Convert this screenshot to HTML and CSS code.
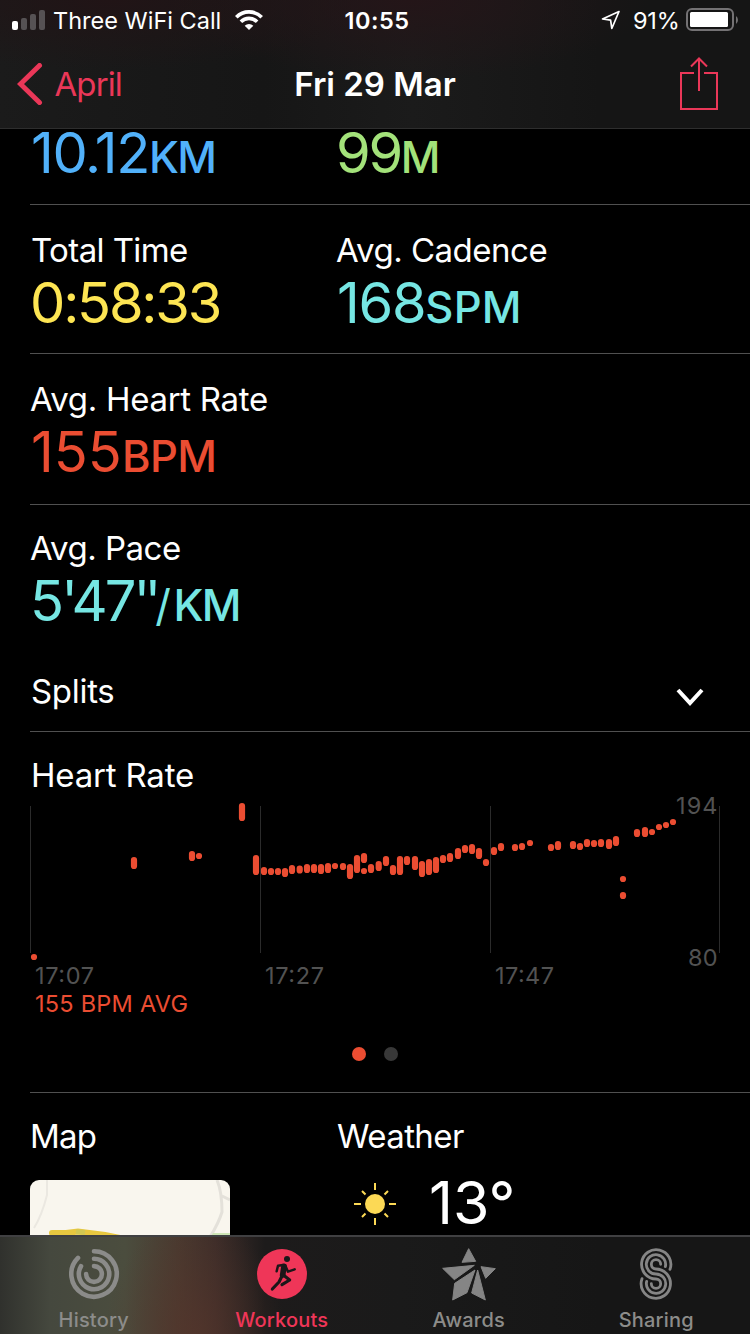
FILE: index.html
```html
<!DOCTYPE html>
<html lang="en">
<head>
<meta charset="utf-8">
<title>Fri 29 Mar</title>
<link rel="stylesheet" href="styles.css">
</head>
<body>
<div class="screen">
  <header class="header">
    <div class="status">
      <div class="status-left">
        <svg class="signal" width="34" height="20" viewBox="0 0 34 20">
          <rect x="0" y="11" width="6" height="9" rx="2" fill="#fff"/>
          <g fill="#565254"><rect x="9" y="8" width="6" height="12" rx="2"/><rect x="18" y="4" width="6" height="16" rx="2"/><rect x="27" y="0" width="6" height="20" rx="2"/></g>
        </svg>
        <span class="carrier">Three WiFi Call</span>
        <svg class="wifi" width="28" height="20" viewBox="0 0 28 20" fill="none" stroke="#fff" stroke-width="3.7">
          <path d="M1.3 7.2A18 18 0 0 1 26.7 7.2M5.9 11.7A11.5 11.5 0 0 1 22.1 11.7"/>
          <path d="M14 20L9.7 15.7A6.2 6.2 0 0 1 18.3 15.7Z" fill="#fff" stroke="none"/>
        </svg>
      </div>
      <span class="clock">10:55</span>
      <div class="status-right">
        <svg class="location" width="20" height="20" viewBox="0 0 20 20" fill="none" stroke="#fff" stroke-width="1.7" stroke-linejoin="round"><path d="M18 1.5L1.5 9L9.600 10.200L10.800 18.500Z"/></svg>
        <span class="percent">91%</span>
        <svg class="battery" width="54" height="24" viewBox="0 0 54 24">
          <rect x="1" y="1" width="46" height="21" rx="5" fill="none" stroke="#747274" stroke-width="2"/>
          <rect x="4" y="4" width="38" height="15" rx="1.5" fill="#fff"/>
          <path d="M50 8a5 5 0 0 1 0 8z" fill="#747274"/>
        </svg>
      </div>
    </div>
    <nav class="nav">
      <a class="back">
        <svg width="26" height="42" viewBox="0 0 26 42" fill="none" stroke="#ea3758" stroke-width="5" stroke-linecap="round" stroke-linejoin="miter"><path d="M22.5 2.5L3.5 21L22.5 39.5"/></svg>
        <span class="back-text">April</span>
      </a>
      <h1 class="title">Fri 29 Mar</h1>
      <svg class="share" width="38" height="54" viewBox="0 0 38 54" fill="none" stroke="#ea3758" stroke-width="2"><path d="M14 16H1V52H37V16H24M19 34V2M11 9.5L19 1.5L27 9.5"/></svg>
    </nav>
  </header>

  <main class="content">
    <section class="row row-first">
      <div class="metric"><div class="value blue"><span class="v-distance">10.12</span><span class="unit unit-tight">KM</span></div></div>
      <div class="metric"><div class="value green"><span class="v-climb">99</span><span class="unit">M</span></div></div>
    </section>
    <section class="row row-time">
      <div class="metric"><div class="label l-time">Total Time</div><div class="value yellow"><span class="v-time">0:58:33</span></div></div>
      <div class="metric"><div class="label l-avg">Avg. Cadence</div><div class="value cyan"><span class="v-cadence">168</span><span class="unit unit-wide">SPM</span></div></div>
    </section>
    <section class="row row-heart">
      <div class="metric"><div class="label l-avg l-rate">Avg. Heart Rate</div><div class="value red"><span class="v-rate">155</span><span class="unit">BPM</span></div></div>
    </section>
    <section class="row row-pace">
      <div class="metric"><div class="label l-avg">Avg. Pace</div><div class="value cyan"><span class="v-pace">5'47<span class="seconds">''</span></span><span class="unit unit-pace"><span class="slash">/</span>KM</span></div></div>
    </section>
    <section class="row row-splits">
      <div class="label l-splits">Splits</div>
      <svg class="chevron" width="28" height="19" viewBox="0 0 28 19" fill="none" stroke="#fff" stroke-width="4"><path d="M2 2L14 15L26 2"/></svg>
    </section>
    <section class="chart-section">
      <div class="label l-chart">Heart Rate</div>
      <svg class="chart" width="750" height="220" viewBox="0 797 750 220">
        <path class="grid" d="M30.5 806V953M260.5 806V953M490.5 806V953M719.5 806V953"/>
        <path class="beats" d="M34 957v.01M134 860v6M192 854v4M199 856v.01M242 806v12M256 858v14
          M264 870v2M271 871v1M278 871v1M285 871v3M292 868v3M299.700 868.500v2M307 867v3M314 867v3M321 867v4M328 866v4M335 866v.01M343 866v1M350 867v9M357 858v12M364 856v4M364 871v.01M371 867v3M378.700 864v4M386 859v4M393 868v4M400 859v13M407 859v3M415 859v8M422 864v10M429 862v10M436 860v10M443 858v2M450 856v3M458 851v5M465 848v2M472 847v4M479 851v5M486 862v1
          M494 850v2M501 846v2M515 847v1M522 846v1M530 843v.01M551 847v1M558 844v3M573 844v2M580 846v1M587 842v2M594 843v1M601 842v2M609 842v4M616 839v4M623 879v.01M623 895v1M637 832v2M645 830v4M652 832v.01M659 827v.01M666 825v.01M673 822v.01"/>
        <text class="axis" x="35" y="984" textLength="59">17:07</text>
        <text class="axis" x="265" y="984" textLength="59">17:27</text>
        <text class="axis" x="495" y="984" textLength="59">17:47</text>
        <text class="axis" x="676" y="814" textLength="41.500">194</text>
        <text class="axis" x="688" y="966" textLength="29.500">80</text>
        <text class="average" x="35" y="1012" textLength="153">155 BPM AVG</text>
      </svg>
      <div class="pager"><i class="dot dot-on"></i><i class="dot"></i></div>
    </section>
    <section class="footer-row">
      <div class="metric">
        <div class="label l-map">Map</div>
        <svg class="map" width="200" height="56" viewBox="0 0 200 56" fill="none">
          <rect width="200" height="60" fill="#f9f6ee"/>
          <path d="M17 0V15Q12 35 4 48" stroke="#ebe8e1" stroke-width="2"/>
          <path d="M187 0Q192 12 192 32Q188 45 178 60M192 16L200 20" stroke="#e4e1da" stroke-width="3"/>
          <path d="M183 53H200V60H178Z" fill="#cde5b5"/>
          <path d="M22 53L36 53L48 51.500L75 55L95 59" stroke="#e8c840" stroke-width="6" stroke-linecap="round"/>
          <path d="M46 51.800L55 52.500" stroke="#d3c852" stroke-width="5"/>
        </svg>
      </div>
      <div class="metric">
        <div class="label l-weather">Weather</div>
        <div class="weather">
          <svg class="sun" width="42" height="42" viewBox="-21 -21 42 42" stroke="#fcd955" stroke-width="2"><circle r="10" fill="#fcd955" stroke="none"/><path d="M0 -21V-14M0 21V14M-21 0H-14M21 0H14M-13 -13L-9.500 -9.500M13 13L9.500 9.500M-13 13L-9.500 9.500M13 -13L9.500 -9.500"/></svg>
          <span class="temp">13°</span>
        </div>
      </div>
    </section>
  </main>

  <nav class="tabs">
    <a class="tab">
      <svg width="54" height="54" viewBox="-27 -27 54 54" fill="none" stroke="#8b8b89" stroke-width="4.600" stroke-linecap="round"><path d="M0 -22.700A22.700 22.700 0 1 1 -16 -16.100M0 -15.200A15.200 15.200 0 1 1 -13 -7.800M0 -7.900A7.900 7.900 0 1 1 -7.900 0"/></svg>
      <span class="tab-text">History</span>
    </a>
    <a class="tab tab-on">
      <svg width="54" height="54" viewBox="0 0 162 162" fill="none" stroke="#1b1719" stroke-linecap="round" stroke-linejoin="round">
        <circle cx="81" cy="81" r="75" fill="#ef3658" stroke="none"/>
        <circle cx="96" cy="36" r="9" fill="#1b1719" stroke="none"/>
        <path d="M87 58L83 84" stroke-width="17"/>
        <path d="M84 54L69 56L65 73M91 56L99 74L119 67" stroke-width="7.500"/>
        <path d="M86 85L104 99L81 113M81 87L72 105L52 126" stroke-width="9.500"/>
      </svg>
      <span class="tab-text">Workouts</span>
    </a>
    <a class="tab">
      <svg width="54" height="54" viewBox="18 21 162 162" fill="#858585" stroke="#858585" stroke-width="3" stroke-linejoin="round"><path d="M98 26L119 64L78 67ZM20 85L115 76L55 119ZM117 90L93 158L50 180L56 130ZM125 90L148 180L107 159ZM135 80L178 86L149 115Z"/></svg>
      <span class="tab-text">Awards</span>
    </a>
    <a class="tab">
      <svg width="54" height="54" viewBox="-3 21 162 162" fill="none" stroke="#858585" stroke-width="8.500" stroke-linecap="round"><path d="M120 88A44 44 0 1 0 78 117A14 14 0 1 1 64 131M106 80A29 29 0 1 0 78 102A29 29 0 1 1 50 124M92 73A14 14 0 1 0 78 87A44 44 0 1 1 36 116"/></svg>
      <span class="tab-text">Sharing</span>
    </a>
  </nav>
</div>
</body>
</html>
```
FILE: styles.css
```css
* { box-sizing: border-box; }
body { margin: 0; background: #000; color: #fff; font-family: Inter, "Liberation Sans", sans-serif; }
svg { display: block; flex: none; }
.screen { width: 750px; height: 1334px; overflow: hidden; display: flex; flex-direction: column; background: #000; }

.header { height: 129px; flex: none; border-bottom: 1px solid #2e2e2e; background: radial-gradient(ellipse 240px 80px at 410px 0, #241518, rgba(36,21,24,0)), radial-gradient(ellipse 260px 70px at 110px 0, #211416, rgba(33,20,22,0)), linear-gradient(90deg, #1b1b1b, #161616 35%, #1b1b1b 55%, #151515 80%); }
.status { height: 40px; display: grid; grid-template-columns: 1fr auto 1fr; align-items: center; padding: 0 12px; font-size: 23.5px; line-height: 39px; }
.status-left { display: flex; align-items: center; }
.carrier { margin-left: 7px; width: 182px; white-space: nowrap; padding-top: 1px; }
.clock { font-weight: 600; letter-spacing: .5px; padding: 1px 0 0 4px; }
.status-right { display: flex; align-items: center; justify-content: flex-end; }
.percent { width: 47px; margin: 0 6px 0 12px; white-space: nowrap; letter-spacing: -.2px; padding-top: 1px; }
.battery { margin-right: -2px; }
.nav { height: 88px; display: grid; grid-template-columns: 1fr auto 1fr; align-items: center; padding: 0 32px 0 32px; }
.back { display: flex; align-items: center; gap: 11.5px; margin-left: -15px; color: #ea3758; font-size: 33px; letter-spacing: -.9px; }
.title { margin: 0; font-size: 33px; font-weight: 600; }
.share { justify-self: end; }

.content { flex: 1; min-height: 0; display: flex; flex-direction: column; }
.row { flex: none; margin-left: 30px; border-bottom: 1px solid #505050; display: grid; grid-template-columns: 306px 1fr; }
.row-first { height: 76px; padding-top: 2px; }
.row-time { height: 149px; padding-top: 25px; }
.row-heart { height: 151px; padding-top: 25px; }
.row-pace { height: 153px; padding-top: 23px; border: 0; }
.row-splits { height: 74px; padding-top: 13px; grid-template-columns: 1fr auto; }
.chevron { margin: 17px 46px 0 0; }

.label { font-size: 33px; line-height: 40px; white-space: nowrap; padding-left: 1px; letter-spacing: -.6px; }
.l-avg { padding-left: 0; letter-spacing: -.5px; }
.l-rate { letter-spacing: -.3px; }
.l-splits, .l-chart { letter-spacing: -.3px; }
.l-chart { padding-left: 31px; letter-spacing: -.2px; }
.l-map { padding-left: 0; letter-spacing: -.8px; }

.value { font-size: 56px; line-height: 44px; margin-top: 11px; white-space: nowrap; }
.row-first .value { margin-top: 0; }
.v-distance { margin-left: 1px; letter-spacing: -1.4px; }
.v-climb { margin-left: 0; letter-spacing: -2.3px; }
.v-time { letter-spacing: -2.2px; }
.v-cadence { margin-left: 1px; letter-spacing: -1.3px; }
.v-rate { margin-left: 1px; }
.v-pace { margin-left: 0; letter-spacing: -2.9px; }
.seconds { letter-spacing: -6px; }
.unit { font-size: 43.5px; line-height: 0; font-weight: 500; letter-spacing: -.5px; }
.unit-tight { letter-spacing: -1.5px; }
.unit-wide { letter-spacing: .3px; }
.unit-pace { letter-spacing: -1.5px; }
.slash { font-weight: 400; letter-spacing: 2.5px; }
.blue { color: #51b1fa; }
.green { color: #a3e27a; }
.yellow { color: #fde553; }
.cyan { color: #76e6e3; }
.red { color: #eb4d32; }

.chart-section { height: 360px; flex: none; padding-top: 23px; display: flex; flex-direction: column; }
.chart { margin-top: 2px; overflow: visible; }
.grid { stroke: #2b2b2b; stroke-width: 1; }
.beats { fill: none; stroke: #eb4d32; stroke-width: 6.2; stroke-linecap: round; }
.axis { fill: #525252; font-size: 23.500px; }
.average { fill: #eb4d32; font-size: 23.500px; }
.pager { display: flex; justify-content: center; gap: 18px; margin-top: 30px; }
.dot { width: 14px; height: 14px; border-radius: 50%; background: #383838; }
.dot-on { background: #eb4d32; }

.footer-row { flex: 1; min-height: 0; margin-left: 30px; border-top: 1px solid #505050; padding-top: 23px; display: grid; grid-template-columns: 306px 1fr; align-items: start; }
.map { margin-top: 24px; border-radius: 9px 9px 0 0; }
.weather { height: 77px; display: flex; align-items: center; padding: 17px 0 0 18px; gap: 33px; }
.sun { margin-top: 2px; }
.temp { font-size: 59px; line-height: 60px; }

.tabs { flex: none; height: 99px; border-top: 2px solid #404042; display: grid; grid-template-columns: repeat(4, 187.5px); background: radial-gradient(ellipse 90px 120px at 195px 100px, rgba(86,53,43,.7), rgba(86,53,43,0)), linear-gradient(90deg, #30312d 0, #45483e 50px, #4b4d3e 125px, #49392f 180px, #3d2d29 215px, #1d1b1b 265px, #1a1a1a 400px, #161616 600px); }
.tab { display: flex; flex-direction: column; align-items: center; padding-top: 10px; color: #8c8c8a; font-size: 20px; font-weight: 500; line-height: 24px; white-space: nowrap; }
.tab-text { margin-top: 7px; letter-spacing: .2px; }
.tab-on { color: #ef3658; padding-left: 1px; }
```
